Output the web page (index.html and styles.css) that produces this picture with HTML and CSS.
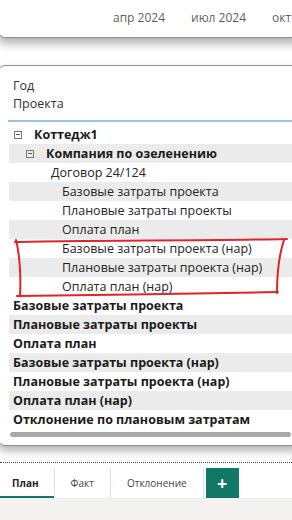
FILE: index.html
```html
<!DOCTYPE html>
<html lang="ru">
<head>
<meta charset="UTF-8" />
<meta name="viewport" content="width=device-width, initial-scale=1" />
<title>Отчёт - План</title>
<link rel="stylesheet" href="styles.css">
</head>
<body>

<div class="axis-card">
  <div class="axis">
    <span>апр 2024</span>
    <span>июл 2024</span>
    <span>окт</span>
  </div>
</div>

<div class="matrix">
  <div class="matrix-head">
    <div>Год</div>
    <div>Проекта</div>
  </div>
  <div class="rows">
    <div class="row lvl0 bold"><span class="toggle"></span>Коттедж1</div>
    <div class="row lvl1 bold alt"><span class="toggle"></span>Компания по озеленению</div>
    <div class="row lvl2">Договор 24/124</div>
    <div class="row lvl3 alt">Базовые затраты проекта</div>
    <div class="row lvl3">Плановые затраты проекты</div>
    <div class="row lvl3 alt">Оплата план</div>
    <div class="row lvl3">Базовые затраты проекта (нар)</div>
    <div class="row lvl3 alt">Плановые затраты проекта (нар)</div>
    <div class="row lvl3">Оплата план (нар)</div>
    <div class="row total">Базовые затраты проекта</div>
    <div class="row total alt">Плановые затраты проекты</div>
    <div class="row total">Оплата план</div>
    <div class="row total alt">Базовые затраты проекта (нар)</div>
    <div class="row total">Плановые затраты проекта (нар)</div>
    <div class="row total alt">Оплата план (нар)</div>
    <div class="row total">Отклонение по плановым затратам</div>
  </div>
  <div class="scrollbar"></div>
</div>

<div class="tabs">
  <div class="tab active">План</div>
  <div class="tab">Факт</div>
  <div class="tab">Отклонение</div>
  <div class="tab-add">+</div>
</div>
<div class="status-strip"></div>

<!-- red hand-drawn mark over the (нар) rows -->
<svg class="mark" width="292" height="520" viewBox="0 0 292 520">
  <path d="M15 242 C 80 240, 200 241, 287 239" />
  <path d="M284 240 C 279 255, 277 275, 277 293" />
  <path d="M17 296 C 100 295, 200 294, 278 292" />
  <path d="M16 240 C 20 255, 21 280, 20 296" />
</svg>

</body>
</html>
```

FILE: styles.css
```css
body {
  margin: 0;
  padding: 0;
  font-family: "Open Sans", Arial, sans-serif;
  background: #fff;
  color: #252423;
  width: 292px;
  height: 520px;
  overflow: hidden;
  position: relative;
}
.axis-card {
  height: 37px;
  margin: 0 -10px 0 -2px;
  border: 1px solid #8f8f8f;
  border-top: none;
  border-radius: 0 0 7px 7px;
  box-shadow: 0 6px 10px rgba(0,0,0,0.3);
  background: #fff;
}
.axis {
  display: flex;
  gap: 26px;
  padding: 10px 0 0 114px;
  font-size: 12px;
  line-height: 16px;
  color: #605e5c;
  white-space: nowrap;
}
.matrix {
  margin: 27px -10px 0 -2px;
  border: 1px solid #8f8f8f;
  border-radius: 7px;
  box-shadow: 0 5px 9px rgba(0,0,0,0.3);
  background: #fff;
  padding-bottom: 8px;
}
.matrix-head {
  margin-left: 9px;
  padding: 11px 0 7px 5px;
  border-bottom: 2px solid #9cc3ea;
  font-size: 12.5px;
  line-height: 18px;
  color: #333;
}
.rows {
  margin: 3px 0 0 10px;
}
.row {
  display: flex;
  align-items: center;
  height: 19px;
  font-size: 12.5px;
  white-space: nowrap;
}
.row.alt {
  background: #ebebeb;
}
.row.bold, .row.total {
  font-weight: 700;
  color: #1b1a19;
}
.lvl0 { padding-left: 5px; }
.lvl1 { padding-left: 17px; }
.lvl2 { padding-left: 42px; }
.lvl3 { padding-left: 53px; }
.total { padding-left: 4px; }
.toggle {
  width: 6px;
  height: 6px;
  border: 1px solid #777;
  margin-right: 12px;
  position: relative;
  flex: none;
}
.toggle::after {
  content: "";
  position: absolute;
  left: 1px;
  right: 1px;
  top: 2.5px;
  height: 1px;
  background: #555;
}
.scrollbar {
  height: 5px;
  margin: 3px 10px 0 11px;
  border-radius: 3px;
  background: #a8a8a8;
}
.tabs {
  display: flex;
  align-items: stretch;
  margin-top: 16px;
  padding-top: 5px;
  border-top: 1px dotted #444;
  height: 30px;
}
.tab {
  display: flex;
  align-items: center;
  padding: 0 16px;
  font-size: 10px;
  color: #444;
  border-right: 1px solid #e1dfdd;
}
.tab.active {
  padding: 0 15px 0 12px;
  font-weight: 700;
  color: #252423;
  box-shadow: inset 0 -2px 0 #117865;
}
.tab-add {
  width: 33px;
  margin-left: 2px;
  background: #117865;
  color: #fff;
  font-size: 18px;
  font-weight: 700;
  display: flex;
  align-items: center;
  justify-content: center;
}
.status-strip {
  height: 22px;
  background: #f3f2f1;
  border-top: 1px solid #ebebeb;
}
.mark {
  position: absolute;
  left: 0;
  top: 0;
  pointer-events: none;
}
.mark path {
  fill: none;
  stroke: #e0242a;
  stroke-width: 2;
  stroke-linecap: round;
}
```
